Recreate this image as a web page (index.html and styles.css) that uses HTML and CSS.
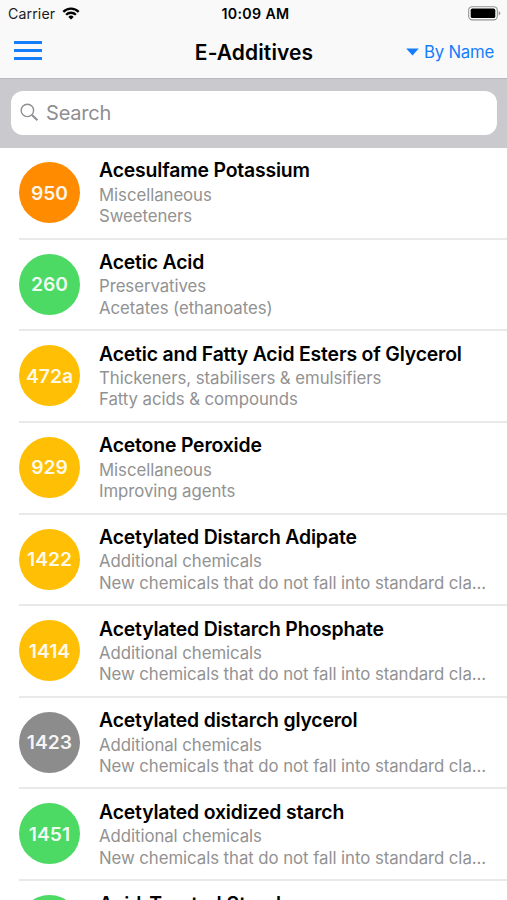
FILE: index.html
```html
<!DOCTYPE html>
<html lang="en">
<head>
<meta charset="utf-8">
<meta name="viewport" content="width=device-width, initial-scale=1">
<title>E-Additives</title>
<link rel="stylesheet" href="styles.css">
</head>
<body>
<header class="top">
  <div class="status">
    <div class="carrier"><span>Carrier</span>
      <svg class="wifi" viewBox="0 0 18 13" width="18" height="13" fill="none" stroke="#000" stroke-width="2.3"><path d="M1.3 4.9a10.9 10.9 0 0 1 15.4 0M4.1 7.8a6.9 6.9 0 0 1 9.8 0"/><path d="M9 12.6L6.3 9.9a3.8 3.8 0 0 1 5.4 0z" fill="#000" stroke="none"/></svg>
    </div>
    <time class="clock">10:09 AM</time>
    <svg class="battery" viewBox="0 0 33 15" width="33" height="15"><rect x=".7" y=".7" width="28.6" height="13.2" rx="3.6" fill="#fff" stroke="#929292" stroke-width="1.1"/><rect x="2.7" y="2.6" width="24.6" height="9.4" rx="1.6"/><path d="M30.7 5.2q1.6.6 1.6 2.1t-1.6 2.1z" fill="#929292"/></svg>
  </div>
  <nav class="bar">
    <button class="menu" aria-label="Menu"><i></i><i></i><i></i></button>
    <h1>E-Additives</h1>
    <button class="sort"><svg viewBox="0 0 13 8" width="13" height="8"><path d="M.2.5h12.6L6.5 7.6z" fill="#147efb"/></svg><span>By Name</span></button>
  </nav>
</header>
<div class="search">
  <label class="field">
    <svg viewBox="0 0 19 19" width="19" height="19" fill="none" stroke="#8e8e93" stroke-width="1.4"><circle cx="7.4" cy="7.4" r="6.2"/><path d="M12 12l5.4 5.2" stroke-width="2"/></svg>
    <span>Search</span>
  </label>
</div>
<main class="list">
  <article class="row"><div class="badge orange">950</div><div class="info"><h2>Acesulfame Potassium</h2><p>Miscellaneous</p><p>Sweeteners</p></div></article>
  <article class="row"><div class="badge green">260</div><div class="info"><h2>Acetic Acid</h2><p>Preservatives</p><p>Acetates (ethanoates)</p></div></article>
  <article class="row"><div class="badge yellow">472a</div><div class="info"><h2>Acetic and Fatty Acid Esters of Glycerol</h2><p>Thickeners, stabilisers &amp; emulsifiers</p><p>Fatty acids &amp; compounds</p></div></article>
  <article class="row"><div class="badge yellow">929</div><div class="info"><h2>Acetone Peroxide</h2><p>Miscellaneous</p><p>Improving agents</p></div></article>
  <article class="row"><div class="badge yellow">1422</div><div class="info"><h2>Acetylated Distarch Adipate</h2><p>Additional chemicals</p><p>New chemicals that do not fall into standard cla...</p></div></article>
  <article class="row"><div class="badge yellow">1414</div><div class="info"><h2>Acetylated Distarch Phosphate</h2><p>Additional chemicals</p><p>New chemicals that do not fall into standard cla...</p></div></article>
  <article class="row"><div class="badge gray">1423</div><div class="info"><h2>Acetylated distarch glycerol</h2><p>Additional chemicals</p><p>New chemicals that do not fall into standard cla...</p></div></article>
  <article class="row"><div class="badge green">1451</div><div class="info"><h2>Acetylated oxidized starch</h2><p>Additional chemicals</p><p>New chemicals that do not fall into standard cla...</p></div></article>
  <article class="row last"><div class="badge green"></div><div class="info"><h2>Acid-Treated Starch</h2></div></article>
</main>
</body>
</html>
```
FILE: styles.css
```css
* { box-sizing: border-box; margin: 0; padding: 0; }
body {
  height: 900px;
  overflow: hidden;
  display: flex;
  flex-direction: column;
  background: #fff;
  color: #000;
  font-family: Inter, "Liberation Sans", sans-serif;
}
button { border: 0; background: none; font: inherit; }
.top { height: 78px; flex: none; background: #f9f9f9; }
.status {
  height: 27px;
  padding: 0 6px 0 8px;
  display: grid;
  grid-template-columns: 1fr auto 1fr;
  align-items: center;
}
.carrier { display: flex; align-items: center; gap: 7px; font-size: 14.2px; letter-spacing: .1px; color: #1c1c1c; }
.clock { font-size: 14.2px; font-weight: 600; letter-spacing: .35px; padding-left: 2px; }
.battery { justify-self: end; }
.bar {
  height: 51px;
  padding: 0 13px 0 14px;
  display: grid;
  grid-template-columns: 1fr auto 1fr;
  align-items: center;
}
.menu { width: 28px; display: flex; flex-direction: column; gap: 4.6px; margin-top: -4px; }
.menu i { height: 3px; background: #147efb; }
.bar h1 { font-size: 21px; font-weight: 600; line-height: 26px; letter-spacing: .1px; }
.sort { justify-self: end; display: flex; align-items: center; gap: 5px; margin-top: -2px; color: #147efb; font-size: 16.8px; letter-spacing: -.25px; }
.search {
  flex: none;
  height: 70px;
  padding: 13px 10px 12px 11px;
  background: #c9c9ce;
  border-top: 1px solid #b9b9bd;
}
.field {
  height: 44px;
  margin-top: -1px;
  padding: 0 0 1px 9px;
  display: flex;
  align-items: center;
  gap: 7px;
  border-radius: 12px;
  background: #fff;
  color: #8e8e93;
  font-size: 20px;
  letter-spacing: -.2px;
}
.list { flex: 1; min-height: 0; overflow: hidden; padding-left: 19px; }
.row {
  height: 91.65px;
  display: flex;
  align-items: flex-start;
  gap: 19px;
  border-bottom: 2px solid #e9e9ea;
}
.badge {
  width: 61px;
  height: 61px;
  margin-top: 14px;
  flex: none;
  display: grid;
  place-items: center;
  border-radius: 50%;
  color: rgba(255, 255, 255, .93);
  font-size: 19.3px;
  font-weight: 600;
}
.orange { background: #ff8c00; }
.green { background: #4cd964; }
.yellow { background: #ffbf05; }
.gray { background: #8c8c8c; }
.info { padding-top: 9.4px; white-space: nowrap; }
.info h2 { font-size: 19.4px; line-height: 27.4px; font-weight: 600; letter-spacing: -.17px; }
.info p { font-size: 16.8px; line-height: 21.3px; color: #929292; letter-spacing: -.06px; }
.last h2 { letter-spacing: .06px; }
```
